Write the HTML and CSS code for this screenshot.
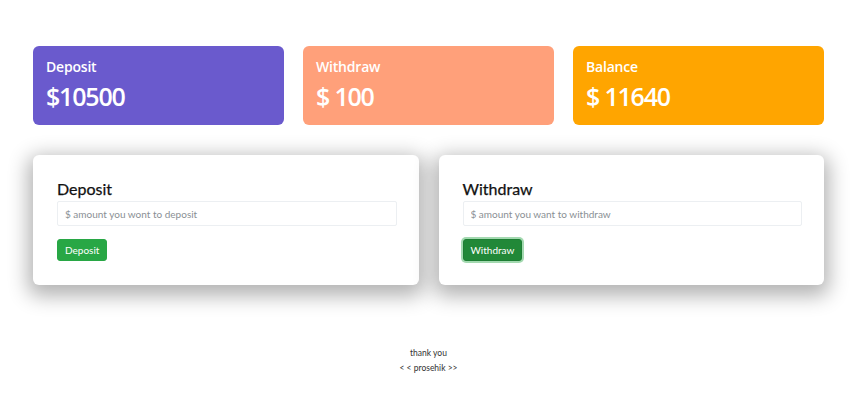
FILE: index.html
```html
<!DOCTYPE html>
<html>
<head>
<meta charset="utf-8">
<link rel="stylesheet" href="styles.css">
</head>
<body>
<div class="page">
  <div class="stats">
    <div class="stat stat-deposit">
      <div class="stat-title">Deposit</div>
      <div class="stat-value">$10500</div>
    </div>
    <div class="stat stat-withdraw">
      <div class="stat-title">Withdraw</div>
      <div class="stat-value">$ 100</div>
    </div>
    <div class="stat stat-balance">
      <div class="stat-title">Balance</div>
      <div class="stat-value">$ 11640</div>
    </div>
  </div>
  <div class="forms">
    <div class="panel">
      <h4 class="panel-title">Deposit</h4>
      <input class="field" type="text" placeholder="$ amount you wont to deposit">
      <button class="btn">Deposit</button>
    </div>
    <div class="panel">
      <h4 class="panel-title">Withdraw</h4>
      <input class="field" type="text" placeholder="$ amount you want to withdraw">
      <button class="btn btn-focus">Withdraw</button>
    </div>
  </div>
  <div class="footer">
    <p>thank you</p>
    <p>&lt; &lt; prosehik &gt;&gt;</p>
  </div>
</div>
</body>
</html>
```
FILE: styles.css
```css
* { box-sizing: border-box; }
body {
  margin: 0;
  font-family: "Lato", "Open Sans", sans-serif;
  background: #fff;
  color: #212529;
}
.page {
  padding: 46px 40px 0 33px;
}
.stats {
  display: flex;
  gap: 19px;
}
.stat {
  flex: 1;
  height: 79px;
  border-radius: 6px;
  padding: 11px 13px;
  color: #fff;
  font-family: "Open Sans", sans-serif;
}
.stat-deposit { background: #6a5acd; }
.stat-withdraw { background: #ffa07a; }
.stat-balance { background: #ffa500; }
.stat-title {
  font-size: 14px;
  font-weight: 600;
  line-height: 20px;
  letter-spacing: -0.2px;
}
.stat-value {
  font-size: 25px;
  font-weight: 600;
  line-height: 34px;
  margin-top: 2px;
  letter-spacing: -1.2px;
}
.forms {
  display: flex;
  gap: 20px;
  margin-top: 30px;
}
.panel {
  flex: 1;
  height: 130px;
  background: #fff;
  border-radius: 6px;
  box-shadow: 0 6px 20px 5px rgba(0,0,0,0.3);
  padding: 24px 22px 0 24px;
}
.panel-title {
  margin: 0;
  font-family: "Lato", sans-serif;
  font-size: 16px;
  font-weight: 400;
  line-height: 20px;
  color: #111;
  -webkit-text-stroke: 0.25px #111;
}
.field {
  display: block;
  width: 100%;
  height: 25px;
  margin-top: 2px;
  border: 1px solid #eceff2;
  border-radius: 2px;
  padding: 0 7px;
  font-family: inherit;
  font-size: 10px;
  color: #495057;
}
.field::placeholder { color: #8a8f94; }
.btn {
  display: block;
  margin-top: 13px;
  height: 22px;
  padding: 0 7px;
  border: 1px solid #28a745;
  border-radius: 3px;
  background: #28a745;
  color: #fff;
  font-family: inherit;
  font-size: 10px;
}
.btn-focus {
  background: #218838;
  border-color: #1e7e34;
  box-shadow: 0 0 0 2px rgba(72,180,97,0.5);
}
.footer {
  margin-top: 61px;
  text-align: center;
  font-size: 8.5px;
  color: #333;
}
.footer p {
  margin: 0;
  line-height: 15px;
}
```
